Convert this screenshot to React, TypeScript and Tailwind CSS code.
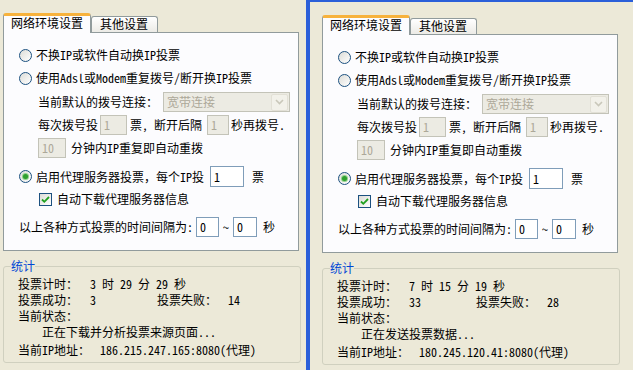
import React from "react";

type Stats = {
    timer: string;
    ok: string;
    fail: string;
    status: string;
    ip: string;
};

const Radio = ({ checked = false }: { checked?: boolean }) => (
    <span className="flex h-[13px] w-[13px] shrink-0 items-center justify-center rounded-full border border-[#1c5180] bg-linear-to-br from-[#dcdcd7] to-white">
        {checked && (
            <span className="h-[5px] w-[5px] rounded-full bg-[#2f9f2f] shadow-[0_0_0_1px_#8fd18a]" />
        )}
    </span>
);

const Check = () => (
    <span className="flex h-[13px] w-[13px] shrink-0 items-center justify-center border border-[#1c5180] bg-linear-to-br from-[#dcdcd7] to-white">
        <svg width="9" height="9" viewBox="0 0 9 9">
            <path d="M1 4.5 L3.3 6.8 L8 2" fill="none" stroke="#21a121" strokeWidth="1.8" />
        </svg>
    </span>
);

// champ de saisie style XP
const Field = ({ value, className, disabled = false }: { value: string; className: string; disabled?: boolean }) => (
    <span
        className={
            "flex items-center pl-[3px] text-[12px] " +
            className +
            (disabled
                ? " border border-[#c3c3b8] bg-[#ecebe3] text-[#aca899]"
                : " border border-[#7f9db9] bg-white text-black")
        }
    >
        {value}
    </span>
);

const Panel = ({ stats }: { stats: Stats }) => (
    <div className="w-[298px] text-[12px] leading-[14px] text-black">
        {/* onglets */}
        <div className="flex h-[19px] items-end">
            <div className="relative z-10 -mb-px h-[20px] w-[88px] rounded-t-[3px] border-x border-t-[3px] border-x-[#919b9c] border-t-[#f7b23c] bg-[#fcfcfe] pl-[7px]">
                网络环境设置
            </div>
            <div className="h-[16px] w-[67px] rounded-t-[3px] border border-b-0 border-[#919b9c] bg-linear-to-b from-white to-[#ecebe6] pl-[8px]">
                其他设置
            </div>
        </div>

        <div className="flex h-[219px] w-[296px] flex-col border border-[#919b9c] bg-[#fcfcfe]">
            <div className="mt-[12px] flex h-[20px] items-center gap-[4px] pl-[15px]">
                <Radio />
                <span>不换IP或软件自动换IP投票</span>
            </div>
            <div className="mt-[3px] flex h-[20px] items-center gap-[4px] pl-[15px]">
                <Radio />
                <span>使用Adsl或Modem重复拨号/断开换IP投票</span>
            </div>
            <div className="mt-[4px] flex h-[20px] items-center pl-[34px]">
                <span>当前默认的拨号连接：</span>
                <span className="ml-[5px] flex h-[20px] w-[127px] items-center border border-[#c3c3b8] bg-[#ecebe3]">
                    <span className="flex-1 pl-[3px] text-[#aca899]">宽带连接</span>
                    <span className="mr-px flex h-[17px] w-[17px] items-center justify-center rounded-[2px] border border-[#e2e0d6] bg-[#f2f1ea]">
                        <svg width="9" height="6" viewBox="0 0 9 6">
                            <path d="M1 1 L4.5 4.5 L8 1" fill="none" stroke="#c9c7ba" strokeWidth="1.6" />
                        </svg>
                    </span>
                </span>
            </div>
            <div className="mt-[3px] flex h-[20px] items-center pl-[34px]">
                <span>每次拨号投</span>
                <Field value="1" disabled className="ml-[2px] h-[20px] w-[27px]" />
                <span className="ml-[3px]">票, 断开后隔</span>
                <Field value="1" disabled className="ml-[5px] h-[20px] w-[22px]" />
                <span className="ml-[2px]">秒再拨号.</span>
            </div>
            <div className="mt-[3px] flex h-[20px] items-center pl-[34px]">
                <Field value="10" disabled className="h-[20px] w-[28px]" />
                <span className="ml-[5px]">分钟内IP重复即自动重拨</span>
            </div>
            <div className="mt-[8px] flex h-[21px] items-center pl-[15px]">
                <Radio checked />
                <span className="ml-[4px]">启用代理服务器投票，每个IP投</span>
                <Field value="1" className="ml-[6px] h-[21px] w-[34px]" />
                <span className="ml-[8px]">票</span>
            </div>
            <div className="mt-[3px] flex h-[18px] items-center pl-[35px]">
                <Check />
                <span className="ml-[5px]">自动下载代理服务器信息</span>
            </div>
            <div className="mt-[9px] flex h-[20px] items-center pl-[15px]">
                <span>以上各种方式投票的时间间隔为:</span>
                <Field value="0" className="ml-[3px] h-[20px] w-[23px]" />
                <span className="ml-[4px]">~</span>
                <Field value="0" className="ml-[4px] h-[20px] w-[24px]" />
                <span className="ml-[6px]">秒</span>
            </div>
        </div>

        {/* statistiques */}
        <fieldset className="mt-[7px] w-[298px] rounded-[3px] border border-[#d0d0bf] pt-[2px] pb-[4px]">
            <legend className="ml-[7px] leading-[16px] text-[#0046d5]">统计</legend>
            <div className="flex h-[16px] items-center pl-[14px]">
                <span className="w-[72px]">投票计时：</span>
                <span>{stats.timer}</span>
            </div>
            <div className="flex h-[16px] items-center pl-[14px]">
                <span className="w-[72px]">投票成功：</span>
                <span className="w-[67px]">{stats.ok}</span>
                <span className="w-[71px]">投票失败：</span>
                <span>{stats.fail}</span>
            </div>
            <div className="flex h-[16px] items-center pl-[14px]">当前状态：</div>
            <div className="flex h-[16px] items-center pl-[38px]">{stats.status}</div>
            <div className="mt-[2px] flex h-[16px] items-center pl-[14px]">
                <span className="w-[82px]">当前IP地址：</span>
                <span>{stats.ip}</span>
            </div>
        </fieldset>
    </div>
);

export default function App() {
    return (
        <div className="flex h-[370px] w-[633px] overflow-hidden bg-[#ece9d8] font-['Noto_Sans_Mono_CJK_SC','Noto_Sans_CJK_SC',sans-serif]">
            <div className="w-[306px] shrink-0 pt-[13px] pl-[3px]">
                <Panel
                    stats={{
                        timer: "3 时 29 分 29 秒",
                        ok: "3",
                        fail: "14",
                        status: "正在下载并分析投票来源页面...",
                        ip: "186.215.247.165:8080(代理)",
                    }}
                />
            </div>
            <div className="flex-1 border-t-2 border-l-4 border-[#2b5fd9] pt-[13px] pl-[12px]">
                <Panel
                    stats={{
                        timer: "7 时 15 分 19 秒",
                        ok: "33",
                        fail: "28",
                        status: "正在发送投票数据...",
                        ip: "180.245.120.41:8080(代理)",
                    }}
                />
            </div>
        </div>
    );
}
